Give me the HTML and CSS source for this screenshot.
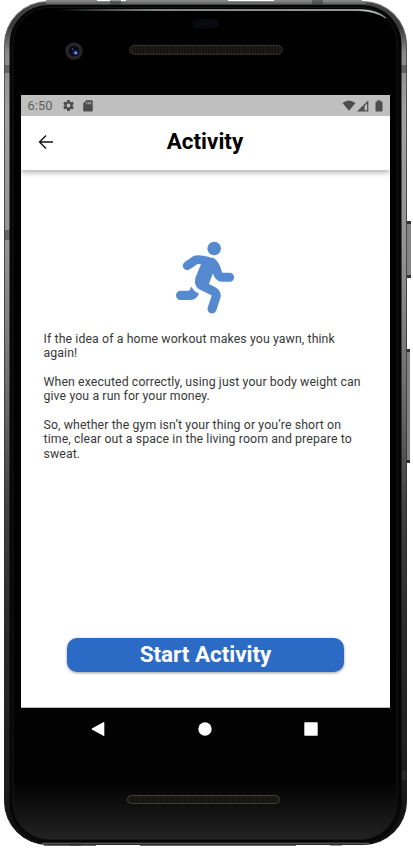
FILE: index.html
```html
<!DOCTYPE html>
<html lang="en">
<head>
<meta charset="utf-8">
<title>Activity</title>
<link rel="stylesheet" href="styles.css">
</head>
<body>
<div class="device">
  <svg class="shell" viewBox="0 0 413 849" aria-hidden="true">
    <defs>
      <linearGradient id="metal" x1="0" y1="0" x2="0" y2="1">
        <stop offset="0" stop-color="#444"/><stop offset=".03" stop-color="#3a3a3a"/><stop offset=".06" stop-color="#888"/><stop offset=".13" stop-color="#a0a0a0"/><stop offset=".3" stop-color="#929292"/><stop offset=".45" stop-color="#707070"/><stop offset=".6" stop-color="#404040"/><stop offset=".75" stop-color="#2a2a2a"/><stop offset=".93" stop-color="#1c1c1c"/><stop offset="1" stop-color="#0c0c0c"/>
      </linearGradient>
      <linearGradient id="glass" x1="0" y1="0" x2="0" y2="1">
        <stop offset="0" stop-color="#000"/><stop offset=".93" stop-color="#020202"/><stop offset="1" stop-color="#222"/>
      </linearGradient>
      <linearGradient id="edge" x1="0" y1="0" x2="0" y2="1">
        <stop offset="0" stop-color="#888"/><stop offset=".05" stop-color="#555"/><stop offset=".5" stop-color="#3c3c3c"/><stop offset="1" stop-color="#161616"/>
      </linearGradient>
      <linearGradient id="shine" x1="0" y1="0" x2="1" y2="0">
        <stop offset="0" stop-color="#9aa5a5" stop-opacity="0"/><stop offset=".3" stop-color="#9aa5a5"/><stop offset="1" stop-color="#b7c1c1"/>
      </linearGradient>
      <pattern id="mesh" width="3" height="4" patternUnits="userSpaceOnUse">
        <rect width="3" height="4" fill="#12110e"/><path d="M.7 0v4" stroke="#24221d"/>
      </pattern>
    </defs>
    <path d="M46 .5h51M126 .5h102M274 .5h88" stroke="#888"/>
    <path d="M406 221h5v57h-5zM406 349h4v114h-4z" fill="#858585"/>
    <path d="M406 221h5v3h-5zM406 275h5v3h-5zM406 349h4v3h-4zM406 460h4v3h-4z" fill="#333"/>
    <rect x="4.500" y="1.500" width="402" height="843" rx="43" fill="url(#metal)" stroke="url(#edge)"/>
    <path d="M46 3h320" stroke="#777" stroke-width="1.500"/>
    <path d="M42 843.500h327" stroke="#555" stroke-width="1.500"/>
    <path d="M44 845.300h52M140 845.300h156" stroke="#444"/>
    <path d="M4 65h6v8H4zM401 65h6v8h-6zM4 230h6v10H4zM401 771h6v9h-6zM110 0h11v5h-11zM312 0h11v5h-11zM69 840h12v6H69zM330 840h12v6h-12z" fill="#333" opacity=".5"/>
    <rect x="9.500" y="5" width="392" height="837" rx="39" fill="#060606"/>
    <rect x="13" y="7.500" width="384" height="832" rx="36" fill="url(#glass)" stroke="#151515"/>
    <path d="M58 9.500H362Q377 10 386 18Q375 11 358 10.500H58z" fill="url(#shine)" stroke="url(#shine)" stroke-width=".6"/>
    <rect x="192" y="19" width="27" height="9.500" rx="4.700" fill="#090a10"/>
    <circle cx="74" cy="51" r="8.700" fill="#252528"/>
    <circle cx="74" cy="51" r="5.200" fill="#080a18"/>
    <circle cx="75.300" cy="52.600" r="2.400" fill="#2c408f"/>
    <circle cx="76" cy="53" r="1.100" fill="#9dbaff"/><circle cx="72.500" cy="49" r=".8" fill="#4762ba"/>
    <rect x="129.800" y="45.300" width="152.500" height="9" rx="4.500" fill="url(#mesh)" stroke="#3c3b36" stroke-width=".9"/>
    <rect x="127.400" y="795.500" width="152" height="8" rx="4" fill="url(#mesh)" stroke="#44463d" stroke-width=".9"/>
  </svg>

  <div class="screen">
    <div class="status">
      <span class="clock">6:50</span>
      <svg class="gear" viewBox="0 0 24 24"><path fill-rule="evenodd" d="M19.4 13a7.8 7.8 0 0 0 0-2l2.2-1.7a.5.5 0 0 0 .1-.6l-2-3.5a.5.5 0 0 0-.6-.2l-2.5 1a7.500 7.500 0 0 0-1.700-1l-.4-2.600a.5.5 0 0 0-.5-.4h-4a.5.5 0 0 0-.5.4l-.4 2.600a7.500 7.500 0 0 0-1.700 1l-2.500-1a.5.5 0 0 0-.6.200l-2 3.500a.5.5 0 0 0 .1.600L4.600 11a7.800 7.800 0 0 0 0 2l-2.200 1.700a.5.5 0 0 0-.1.600l2 3.500c.1.200.4.300.6.200l2.500-1a7.500 7.500 0 0 0 1.700 1l.4 2.600c0 .2.200.4.500.4h4c.2 0 .5-.2.500-.4l.4-2.600a7.500 7.500 0 0 0 1.700-1l2.500 1c.2.100.5 0 .6-.2l2-3.500a.5.5 0 0 0-.1-.6zM12 15.500a3.500 3.500 0 1 1 0-7 3.500 3.500 0 0 1 0 7z"/></svg>
      <svg class="card" viewBox="0 0 10 12"><path fill-rule="evenodd" d="M3.300.3h5.500q1 0 1 1v9.300q0 1-1 1H1.200q-1 0-1-1V3.500zM3.200 2v2.200h1V2zM5.200 2v2.200h1V2zM7.200 2v2.200h1V2z"/></svg>
      <svg class="wifi" viewBox="0 0 14 12"><path d="M.5 3.100Q7-2.300 13.500 3.100L7 10.800z"/></svg>
      <svg class="signal" viewBox="0 0 12 12"><path fill-rule="evenodd" d="M0 11.500L11.300.2v11.300zM7.500 6v4.300h2.600V3.400z"/></svg>
      <svg class="battery" viewBox="0 0 8 12"><path d="M2.300.3h3.200v1.200h1q1 0 1 1v8q0 1-1 1h-5q-1 0-1-1v-8q0-1 1-1h.8z"/></svg>
    </div>
    <header class="appbar">
      <svg class="back" viewBox="0 0 16 16"><path d="M15 8H1.700M8 1.500L1.500 8L8 14.500"/></svg>
      <h1 class="title">Activity</h1>
    </header>
    <main class="content">
      <svg class="runner" viewBox="75 45 180 225">
        <circle cx="192.500" cy="70.500" r="20.500"/>
        <path class="limb" d="M112 122L135 106Q145 101 174 109"/>
        <path class="limb" d="M186 112Q197 122 201 139Q205 157 217 157H239"/>
        <path class="limb" d="M152 160Q143 178 160 184L190 199Q202 205 197 219L186 252"/>
        <path d="M153 118L137 156Q130 182 152 192L185 195L177 176L190 142L203 118L178 97L150 98Z"/>
        <path d="M125 185C120 188 122 195 116 197H92A14 14 0 0 0 92 225H122Q140 225 147 205Q131 200 125 185Z"/>
      </svg>
      <div class="copy">
        <p>If the idea of a home workout makes you yawn, think<br>again!</p>
        <p>When executed correctly, using just your body weight can<br>give you a run for your money.</p>
        <p>So, whether the gym isn’t your thing or you’re short on<br>time, clear out a space in the living room and prepare to<br>sweat.</p>
      </div>
      <button class="start">Start Activity</button>
    </main>
  </div>
  <nav class="nav">
    <svg viewBox="0 0 14 16"><path d="M12.300 1.200q1-.5 1 .5v12.600q0 1-1 .5L.9 8.600q-.7-.5 0-1z"/></svg>
    <svg viewBox="0 0 14 16"><circle cx="7" cy="8" r="6.700"/></svg>
    <svg viewBox="0 0 14 16"><rect x=".3" y="1.200" width="13.400" height="13.600" rx=".8"/></svg>
  </nav>
</div>
</body>
</html>
```
FILE: styles.css
```css
* { box-sizing: border-box; }
body { margin: 0; background: #fff; font-family: Roboto, "Liberation Sans", sans-serif; }
.device { position: relative; width: 413px; height: 849px; padding: 95px 23px 0 21px; overflow: hidden; }
.shell { position: absolute; left: 0; top: 0; width: 413px; height: 849px; }
.screen { position: relative; display: flex; flex-direction: column; width: 369px; height: 613px; background: #fff; border-bottom: 1px solid #bbb; }
.status { display: flex; align-items: center; height: 21px; flex: none; background: #bfbfbf; padding: 0 7px 0 6.500px; color: #5c5c5c; }
.status svg { fill: #4d4d4d; flex: none; }
.clock { width: 34.500px; font-size: 12.800px; letter-spacing: .1px; line-height: 21px; }
.gear { width: 13px; height: 13px; }
.card { width: 10px; height: 12px; margin-left: 8px; }
.wifi { width: 14px; height: 12px; margin-left: auto; }
.signal { width: 12px; height: 12px; margin-left: 1px; }
.battery { width: 8px; height: 12px; margin-left: 6px; }
.appbar { display: grid; grid-template-columns: 50px 1fr 50px; align-items: center; height: 54px; flex: none; background: #fff; box-shadow: 0 2px 6px rgba(0,0,0,.35); clip-path: inset(0 0 -12px 0); }
.back { width: 16px; height: 16px; margin: -3px 0 0 17px; fill: none; stroke: #111; stroke-width: 1.4; }
.title { margin: -4px 1px 0 0; text-align: center; font-size: 22.400px; line-height: 26px; font-weight: 700; color: #000; }
.content { display: flex; flex-direction: column; flex: 1; padding: 70px 22px 36px; }
.runner { width: 60px; height: 75px; margin-left: 132px; fill: #558ad1; }
.limb { fill: none; stroke: #558ad1; stroke-width: 27; stroke-linecap: round; stroke-linejoin: round; }
.copy { margin: 17px 0 0 .5px; font-size: 12.300px; line-height: 14.350px; letter-spacing: .11px; color: #383838; white-space: nowrap; }
.copy p { margin: 0 0 14.350px; }
.start { width: 277px; height: 34px; margin: auto auto -1px 24px; padding: 0; border: 0; border-radius: 10px; background: #2b6bc5; box-shadow: 0 1px 3px rgba(0,0,0,.4); color: #fff; font: 700 22.400px/32px Roboto, "Liberation Sans", sans-serif; padding-bottom: 2px; }
.nav { position: relative; display: flex; justify-content: space-between; width: 369px; padding: 13px 72px 0 70px; }
.nav svg { width: 14px; height: 16px; fill: #fff; }
```
